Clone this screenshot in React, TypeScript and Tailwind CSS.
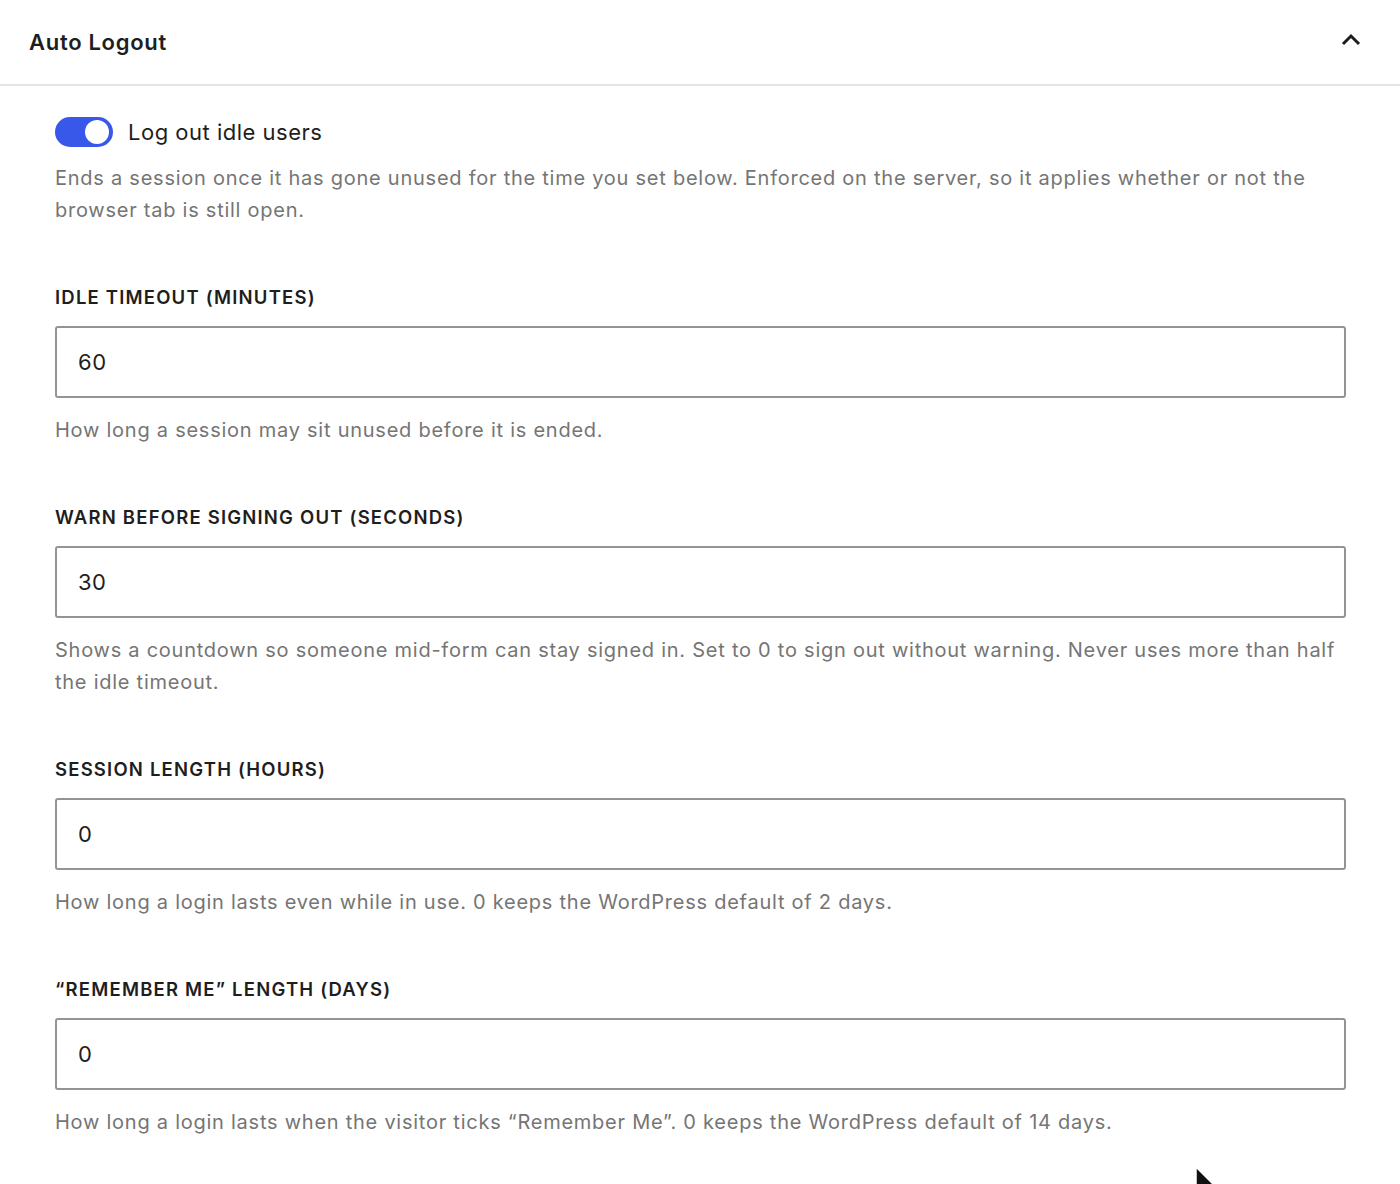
import React from "react";

const font = { fontFamily: "Inter, 'Noto Sans', 'Liberation Sans', sans-serif" };

function Field({ label, value, help }: { label: string; value: string; help: React.ReactNode }) {
  return (
    <div className="flex flex-col">
      <div className="text-[18.5px] leading-[22px] font-semibold uppercase text-[#1e1e1e] tracking-[1.2px]">{label}</div>
      <div className="mt-[18px] h-[72px] w-[1291px] border-[2px] border-[#949494] rounded-[3px] flex items-center pl-[21px] text-[22px] text-[#1e1e1e] tracking-[0.5px]">
        {value}
      </div>
      <div className="mt-[16px] w-[1291px] text-[20px] leading-[32px] text-[#757575] tracking-[0.75px]">{help}</div>
    </div>
  );
}

export default function App() {
  return (
    <div className="relative w-[1400px] h-[1184px] bg-white overflow-hidden" style={font}>
      <div className="h-[86px] border-b-[2px] border-[#e4e4e4] flex items-center justify-between pl-[29px] pr-[38px]">
        <div className="text-[22px] font-semibold text-[#1e1e1e] tracking-[0.7px]">Auto Logout</div>
        <svg width="22" height="16" viewBox="0 0 22 16" className="mb-[4px]">
          <path d="M3 12 L11 4 L19 12" fill="none" stroke="#1e1e1e" strokeWidth="3" />
        </svg>
      </div>
      <div className="pl-[55px] pt-[30px]">
        <div className="flex items-center gap-[15px] h-[32px]">
          <div className="w-[58px] h-[30px] rounded-full bg-[#3858e9] relative">
            <div className="absolute right-[4px] top-[3px] w-[24px] h-[24px] rounded-full bg-white" />
          </div>
          <div className="text-[22px] text-[#1e1e1e] tracking-[0.5px]">Log out idle users</div>
        </div>
        <div className="mt-[14px] w-[1291px] text-[20px] leading-[32px] text-[#757575] tracking-[0.75px]">
          Ends a session once it has gone unused for the time you set below. Enforced on the server, so it applies whether or not the browser tab is still open.
        </div>
        <div className="mt-[60px] flex flex-col gap-[60px]">
          <Field label="Idle timeout (minutes)" value="60" help="How long a session may sit unused before it is ended." />
          <Field
            label="Warn before signing out (seconds)"
            value="30"
            help="Shows a countdown so someone mid-form can stay signed in. Set to 0 to sign out without warning. Never uses more than half the idle timeout."
          />
          <Field label="Session length (hours)" value="0" help="How long a login lasts even while in use. 0 keeps the WordPress default of 2 days." />
          <Field
            label="“Remember Me” length (days)"
            value="0"
            help="How long a login lasts when the visitor ticks “Remember Me”. 0 keeps the WordPress default of 14 days."
          />
        </div>
      </div>
      <svg className="absolute left-[1194px] top-[1166px]" width="24" height="30" viewBox="0 0 24 30">
        <path d="M2 1 L2 26 L8 20 L12 29 L16 27 L12 19 L20 19 Z" fill="#111" stroke="#fff" strokeWidth="1.5" />
      </svg>
    </div>
  );
}
